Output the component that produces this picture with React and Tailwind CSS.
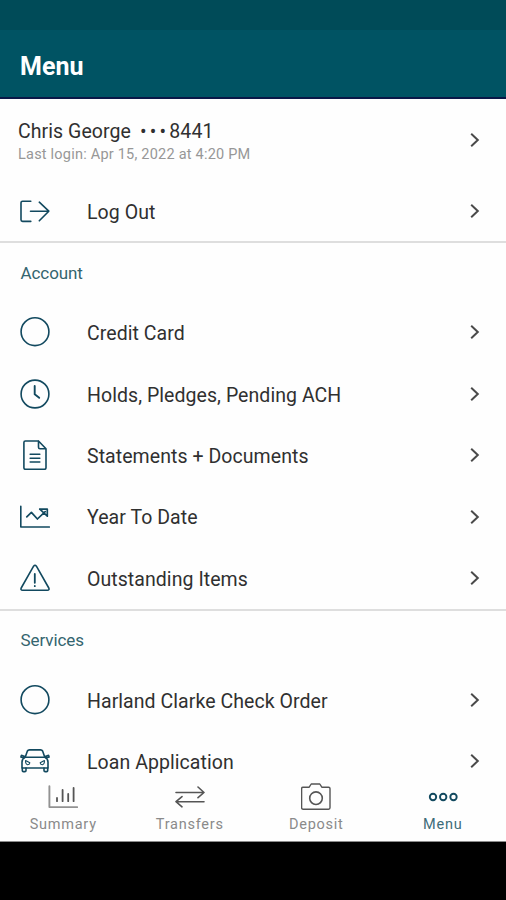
import React from 'react';
import clsx from 'clsx';

const Icon = ({ children, className }) => (
  <svg
    viewBox="0 0 30 30"
    fill="none"
    stroke="currentColor"
    strokeWidth="1.6"
    strokeLinecap="round"
    strokeLinejoin="round"
    className={clsx('h-[30px] w-[30px] shrink-0', className)}
  >
    {children}
  </svg>
);

const icons = {
  logout: (
    <>
      <path d="M10.8 5.2H2.6Q1 5.2 1 6.8V23.8Q1 25.4 2.6 25.4H10.8" />
      <path d="M10.5 15.2H28.8M19.3 6.2L28.8 15.2L19.3 24.8" />
    </>
  ),
  circle: <circle cx="15" cy="14.7" r="13.9" />,
  clock: (
    <>
      <circle cx="15" cy="15" r="13.9" />
      <path d="M14.7 7V15.3L19.2 18.8" strokeWidth="1.9" />
    </>
  ),
  document: (
    <>
      <path d="M18.5 1H5.4Q3.9 1 3.9 2.5V27.8Q3.9 29.3 5.4 29.3H24.5Q26 29.3 26 27.8V8.8L18.5 1V7.3Q18.5 8.8 20 8.8H26" />
      <path d="M10.2 14.2H19.8M10.2 18.2H19.8M10.2 22H19.8" />
    </>
  ),
  trend: (
    <>
      <path d="M.8 4.3V25H29.3" />
      <path d="M6.8 14.8L11.4 10.4L17.4 17L25.2 9.6M19.8 7.2H27.3V14.2L19.8 7.2" strokeWidth="1.7" />
    </>
  ),
  warning: (
    <>
      <path d="M13.6 3.2Q15 1.3 16.4 3.2L28.8 25Q29.7 27.2 27.4 27.2H2.6Q.3 27.2 1.2 25Z" />
      <path d="M14.8 11V19.8M14.8 23V23.2" strokeWidth="1.8" />
    </>
  ),
  car: (
    <>
      <path d="M5.2 11.3L7.4 5Q8 3.9 9.4 3.9H20.6Q22 3.9 22.6 5L24.8 11.3" />
      <path d="M5.2 11.3H24.8Q28 12.7 28 16V22H2V16Q2 12.7 5.2 11.3Z" />
      <path d="M4.8 10.4L2 9.4Q.7 9.6 1.1 11.3L3.8 11.6M25.2 10.4L28 9.4Q29.3 9.6 28.9 11.3L26.2 11.6" />
      <path d="M2.3 22V24.5Q2.3 25.6 3.4 25.6H4.8Q6 25.6 6 24.5V22M24 22V24.5Q24 25.6 25.2 25.6H26.6Q27.7 25.6 27.7 24.5V22" />
      <path d="M5.6 14.5L9.8 16.8Q9.5 18.8 7.4 18.8Q5.4 18.3 5.6 14.5ZM24.4 14.5L20.2 16.8Q20.5 18.8 22.6 18.8Q24.6 18.3 24.4 14.5Z" strokeWidth="1.1" />
    </>
  ),
  summary: (
    <>
      <path d="M1.4 4.2V25.1H29.2" stroke="#929292" strokeWidth="1.9" />
      <path d="M9 16V19.2M14.6 8V19.2M20.2 12V19.2M25.6 6V19.2" strokeWidth="1.8" />
    </>
  ),
  transfers: <path d="M1 10.5H29M23 5L29 10.5L23 15.7M29 19.7H1M7 14.6L1 19.7L7 24.8" />,
  deposit: (
    <>
      <path d="M2 5.2H8.2L10.2 2H18.8L20.8 5.2H27.6Q29 5.2 29 6.6V25.8Q29 27.2 27.6 27.2H2Q.6 27.2 .6 25.8V6.6Q.6 5.2 2 5.2Z" strokeWidth="1.4" />
      <circle cx="15" cy="16.2" r="6.3" />
    </>
  ),
  dots: (
    <g strokeWidth="1.9">
      <circle cx="5" cy="15" r="3.2" />
      <circle cx="15.2" cy="15" r="3.2" />
      <circle cx="25.5" cy="15" r="3.2" />
    </g>
  ),
};

const sections = [
  {
    title: 'Account',
    items: [
      { icon: 'circle', label: 'Credit Card' },
      { icon: 'clock', label: 'Holds, Pledges, Pending ACH' },
      { icon: 'document', label: 'Statements + Documents' },
      { icon: 'trend', label: 'Year To Date' },
      { icon: 'warning', label: 'Outstanding Items' },
    ],
  },
  {
    title: 'Services',
    items: [
      { icon: 'circle', label: 'Harland Clarke Check Order' },
      { icon: 'car', label: 'Loan Application' },
    ],
  },
];

const tabs = [
  { icon: 'summary', label: 'Summary' },
  { icon: 'transfers', label: 'Transfers' },
  { icon: 'deposit', label: 'Deposit' },
  { icon: 'dots', label: 'Menu', active: true },
];

const Chevron = () => (
  <svg viewBox="0 0 10 16" fill="none" stroke="#4a4a4a" strokeWidth="2" className="ml-auto h-4 w-2.5 shrink-0">
    <path d="M1.2 1.8L7.8 8L1.2 14.2" />
  </svg>
);

const MenuRow = ({ icon, label, className }) => (
  <div className={clsx('flex shrink-0 items-center pr-[26px] pl-5', className)}>
    <Icon className="text-[#12495f]">{icons[icon]}</Icon>
    <span className="ml-[37px] pt-[3px] text-[19.5px] tracking-[0.06px] whitespace-nowrap text-[#303030]">
      {label}
    </span>
    <Chevron />
  </div>
);

const App = () => (
  <div className="flex h-[900px] w-[506px] flex-col overflow-hidden bg-black font-['Roboto',sans-serif]">
    <div className="h-[30px] shrink-0 bg-[#004b58]" />
    <header className="flex h-[69px] shrink-0 items-center border-b-2 border-[#0a1747] bg-[#005363] px-5">
      <h1 className="pt-1.5 text-[25px] font-bold text-white">Menu</h1>
    </header>

    <main className="flex min-h-0 flex-1 flex-col overflow-hidden bg-[#fefefe]">
      <div className="flex h-[82px] shrink-0 items-center pr-[26px] pl-[18px]">
        <div className="pt-[3px]">
          <div className="flex text-[19.5px] leading-[25px] tracking-[0.06px] text-[#303030]">
            <span>Chris George</span>
            <span className="ml-[9px] tracking-[3.2px]">•••</span>
            <span className="tracking-[0.15px]">8441</span>
          </div>
          <div className="text-[14.5px] leading-[21px] tracking-[0.22px] text-[#979797]">
            Last login: Apr 15, 2022 at 4:20 PM
          </div>
        </div>
        <Chevron />
      </div>
      <MenuRow icon="logout" label="Log Out" className="h-[60px]" />

      {sections.map((section) => (
        <section key={section.title} className="shrink-0 border-t-2 border-[#dedede]">
          <h2 className="flex h-[58.7px] items-center pt-0.5 pl-[20.5px] text-[17px] tracking-[-0.08px] text-[#34656f]">
            {section.title}
          </h2>
          {section.items.map((item) => (
            <MenuRow key={item.label} icon={item.icon} label={item.label} className="h-[61.4px]" />
          ))}
        </section>
      ))}
    </main>

    <nav className="grid h-[62px] shrink-0 grid-cols-4 border-b border-[#8c8c8c] bg-[#fefefe]">
      {tabs.map((tab) => (
        <div
          key={tab.label}
          className={clsx('flex flex-col items-center pt-0.5', tab.active ? 'text-[#12495f]' : 'text-[#555555]')}
        >
          <Icon>{icons[tab.icon]}</Icon>
          <span className={clsx('mt-[3px] text-[14.5px] leading-5 tracking-[0.75px]', tab.active ? 'text-[#3d6c79]' : 'text-[#8a8a8a]')}>
            {tab.label}
          </span>
        </div>
      ))}
    </nav>
    <div className="h-[58px] shrink-0 bg-black" />
  </div>
);

export default App;
